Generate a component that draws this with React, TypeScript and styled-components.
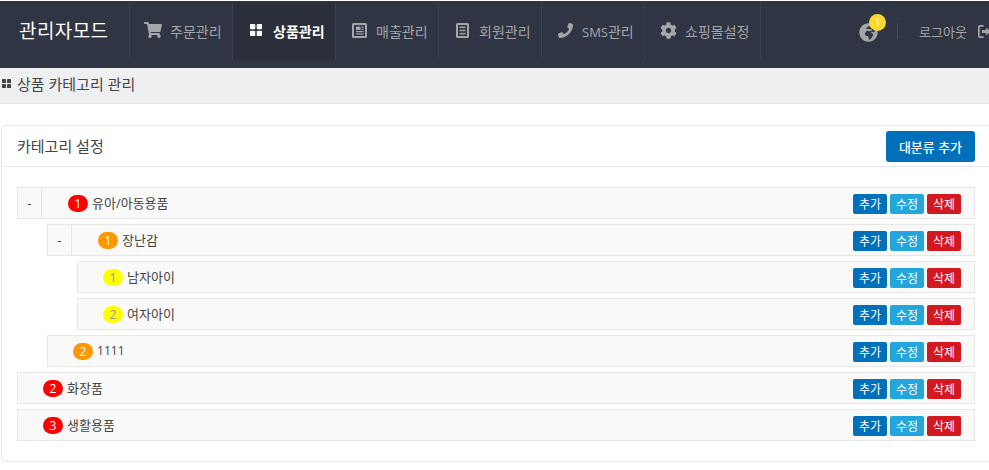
import React from "react";
import styled, { createGlobalStyle } from "styled-components";
import { FaShoppingCart, FaPhone, FaCog, FaGlobeAfrica } from "react-icons/fa";

const Global = createGlobalStyle`
  html, body { margin: 0; padding: 0; background: #fff; overflow: hidden; }
  body { font-family: "Open Sans", "Noto Sans CJK KR", sans-serif; font-size: 12px; color: #333; }
  * { box-sizing: border-box; }
`;

const Page = styled.div`
  width: 989px;
  height: 470px;
  overflow: hidden;
`;

const TopBar = styled.header`
  height: 67px;
  margin-top: 1px;
  background: #2f3542;
  display: flex;
  align-items: flex-start;
  padding-top: 1px;
`;

const Brand = styled.div`
  width: 130px;
  height: 58px;
  padding-left: 19px;
  padding-top: 15px;
  color: #fff;
  font-size: 19px;
  line-height: 28px;
  letter-spacing: 0.4px;
  border-right: 1px solid #3a414f;
`;

const NavItem = styled.div<{ $active?: boolean; $w: number }>`
  width: ${(p) => p.$w}px;
  height: 58px;
  display: flex;
  align-items: center;
  padding-left: 14px;
  gap: 8px;
  font-size: 14px;
  font-weight: ${(p) => (p.$active ? 700 : 400)};
  color: ${(p) => (p.$active ? "#fff" : "#a4a6aa")};
  background: ${(p) => (p.$active ? "#2b2f3b" : "transparent")};
  border-right: 1px solid #3a414f;
`;

const IconSlot = styled.span`
  width: 18px;
  height: 18px;
  flex: none;
  display: flex;
  align-items: center;
  justify-content: center;
  margin-top: -2px;
  font-size: 18px;
`;

const Latin = styled.span`
  font-size: 0.93em;
`;

const Right = styled.div`
  margin-left: auto;
  height: 58px;
  display: flex;
  align-items: center;
  color: #a4a6aa;
`;

const Globe = styled.div`
  position: relative;
  width: 19px;
  height: 19px;
  margin-right: 19px;
  margin-top: 2px;
  font-size: 19px;
  line-height: 0;
`;

const Count = styled.span`
  position: absolute;
  top: -9px;
  left: 10px;
  width: 17px;
  height: 17px;
  border-radius: 50%;
  background: #fad733;
  color: #fff;
  font-size: 10px;
  line-height: 17px;
  text-align: center;
`;

const Divider = styled.span`
  width: 1px;
  height: 16px;
  background: #434a58;
  margin-right: 21px;
`;

const Logout = styled.div`
  display: flex;
  align-items: center;
  gap: 11px;
  width: 70px;
  white-space: nowrap;
  font-size: 13px;
  svg { flex: none; }
`;

const SubBar = styled.div`
  height: 36px;
  background: #eeeff1;
  border-bottom: 1px solid #e6e6e8;
  display: flex;
  align-items: center;
  padding: 0 0 5px 2px;
  gap: 6px;
  font-size: 15px;
  color: #444;
`;

const Card = styled.section`
  margin: 21px 0 0 1px;
  width: 994px;
  height: 337px;
  border: 1px solid #e7e7e7;
  border-radius: 4px;
`;

const CardHead = styled.div`
  height: 41px;
  border-bottom: 1px solid #e7e7e7;
  display: flex;
  align-items: center;
  padding: 0 0 1px 15px;
  font-size: 15px;
  color: #444;
  position: relative;
`;

const AddMain = styled.button`
  position: absolute;
  left: 884px;
  top: 5px;
  width: 89px;
  height: 31px;
  border: 0;
  border-radius: 3px;
  background: #0070ba;
  color: #fff;
  font: 500 13px "Open Sans", "Noto Sans CJK KR", sans-serif;
`;

const List = styled.div`
  padding: 20px 0 0 15px;
  display: flex;
  flex-direction: column;
  gap: 5px;
`;

const Row = styled.div<{ $indent: number }>`
  margin-left: ${(p) => p.$indent}px;
  width: ${(p) => 958 - p.$indent}px;
  height: 32px;
  background: #f9f9f9;
  border: 1px solid #e7e7e7;
  display: flex;
  align-items: center;
`;

const Toggle = styled.span`
  width: 24px;
  height: 30px;
  flex: none;
  border-right: 1px solid #e7e7e7;
  display: flex;
  align-items: center;
  justify-content: center;
  color: #333;
  font-size: 12px;
  margin-right: 26px;
`;

const Spacer = styled.span`
  width: 25px;
  flex: none;
`;

const Level = styled.span<{ $bg: string; $fg: string }>`
  width: 20px;
  height: 17px;
  border-radius: 9px;
  flex: none;
  background: ${(p) => p.$bg};
  color: ${(p) => p.$fg};
  font-size: 12px;
  line-height: 17px;
  text-align: center;
`;

const Name = styled.span`
  margin-left: 4px;
  margin-bottom: 2px;
  font-size: 13px;
  color: #444;
`;

const Actions = styled.div`
  margin-left: auto;
  margin-right: 13px;
  margin-top: 2px;
  display: flex;
  gap: 3px;
`;

const Btn = styled.button<{ $bg: string }>`
  width: 34px;
  height: 20px;
  padding: 1px 0 0;
  border: 0;
  border-radius: 2px;
  background: ${(p) => p.$bg};
  color: #fff;
  font: 400 12px/19px "Open Sans", "Noto Sans CJK KR", sans-serif;
`;

const ThLarge = ({ s }: { s: number }) => (
  <svg width={s} height={s} viewBox="0 0 12 12" fill="currentColor">
    <rect x="0" y="0" width="5.3" height="5.3" rx="0.8" />
    <rect x="6.7" y="0" width="5.3" height="5.3" rx="0.8" />
    <rect x="0" y="6.7" width="5.3" height="5.3" rx="0.8" />
    <rect x="6.7" y="6.7" width="5.3" height="5.3" rx="0.8" />
  </svg>
);

const Newspaper = () => (
  <svg width="15" height="15" viewBox="0 0 15 15" fill="currentColor">
    <path d="M1.5 0h12A1.5 1.5 0 0 1 15 1.5v12a1.5 1.5 0 0 1-1.5 1.5h-12A1.5 1.5 0 0 1 0 13.500v-12A1.500 1.500 0 0 1 1.500 0zM2 2v11h11V2z" fillRule="evenodd" />
    <rect x="4" y="3.500" width="4.500" height="3.500" />
    <rect x="9.500" y="3.500" width="2" height="1.200" />
    <rect x="9.500" y="5.800" width="2" height="1.200" />
    <rect x="4" y="8" width="7.500" height="1.200" />
    <rect x="4" y="10.300" width="7.500" height="1.200" />
  </svg>
);

const FileText = () => (
  <svg width="13" height="15" viewBox="0 0 13 15" fill="currentColor">
    <path d="M1.500 0h10A1.500 1.500 0 0 1 13 1.500v12a1.500 1.500 0 0 1-1.500 1.500h-10A1.500 1.500 0 0 1 0 13.500v-12A1.500 1.500 0 0 1 1.500 0zM2 2v11h9V2z" fillRule="evenodd" />
    <rect x="3.500" y="3.500" width="6" height="1.500" />
    <rect x="3.500" y="6.700" width="6" height="1.500" />
    <rect x="3.500" y="9.900" width="6" height="1.500" />
  </svg>
);

const SignOut = () => (
  <svg width="13" height="13" viewBox="0 0 13 13" fill="currentColor">
    <path d="M0 2a2 2 0 0 1 2-2h3.500v1.700H2.200a.5.5 0 0 0-.5.5v8.600a.5.5 0 0 0 .5.500h3.300V13H2a2 2 0 0 1-2-2z" />
    <path d="M8 2.800l5 3.700-5 3.700V8H4V5h4z" />
  </svg>
);

const nav = [
  { icon: <FaShoppingCart />, label: <span>주문관리</span>, w: 103 },
  { icon: <ThLarge s={12} />, label: <span>상품관리</span>, w: 103, active: true },
  { icon: <Newspaper />, label: <span>매출관리</span>, w: 103 },
  { icon: <FileText />, label: <span>회원관리</span>, w: 103 },
  { icon: <FaPhone style={{ fontSize: 15 }} />, label: <span><Latin>SMS</Latin>관리</span>, w: 103 },
  { icon: <FaCog style={{ fontSize: 17 }} />, label: <span>쇼핑몰설정</span>, w: 116 },
];

const colors = {
  1: { bg: "#ff0000", fg: "#fff" },
  2: { bg: "#ff9800", fg: "#fff" },
  3: { bg: "#ffff00", fg: "#999" },
};

const rows = [
  { d: 1, n: 1, name: "유아/아동용품", open: true },
  { d: 2, n: 1, name: "장난감", open: true },
  { d: 3, n: 1, name: "남자아이" },
  { d: 3, n: 2, name: "여자아이" },
  { d: 2, n: 2, name: <Latin>1111</Latin> },
  { d: 1, n: 2, name: "화장품" },
  { d: 1, n: 3, name: "생활용품" },
] as { d: 1 | 2 | 3; n: number; name: React.ReactNode; open?: boolean }[];

export default function App() {
  return (
    <Page>
      <Global />
      <TopBar>
        <Brand>관리자모드</Brand>
        {nav.map((n, i) => (
          <NavItem key={i} $w={n.w} $active={n.active}>
            <IconSlot>{n.icon}</IconSlot>
            {n.label}
          </NavItem>
        ))}
        <Right>
          <Globe>
            <FaGlobeAfrica />
            <Count>1</Count>
          </Globe>
          <Divider />
          <Logout>
            <span>로그아웃</span>
            <SignOut />
          </Logout>
        </Right>
      </TopBar>
      <SubBar>
        <ThLarge s={9} />
        <span>상품 카테고리 관리</span>
      </SubBar>
      <Card>
        <CardHead>
          카테고리 설정
          <AddMain>대분류 추가</AddMain>
        </CardHead>
        <List>
          {rows.map((r, i) => (
            <Row key={i} $indent={(r.d - 1) * 30}>
              {r.open ? <Toggle>-</Toggle> : <Spacer />}
              <Level $bg={colors[r.d].bg} $fg={colors[r.d].fg}>{r.n}</Level>
              <Name>{r.name}</Name>
              <Actions>
                <Btn $bg="#0070ba">추가</Btn>
                <Btn $bg="#23a6dc">수정</Btn>
                <Btn $bg="#d4181f">삭제</Btn>
              </Actions>
            </Row>
          ))}
        </List>
      </Card>
    </Page>
  );
}
